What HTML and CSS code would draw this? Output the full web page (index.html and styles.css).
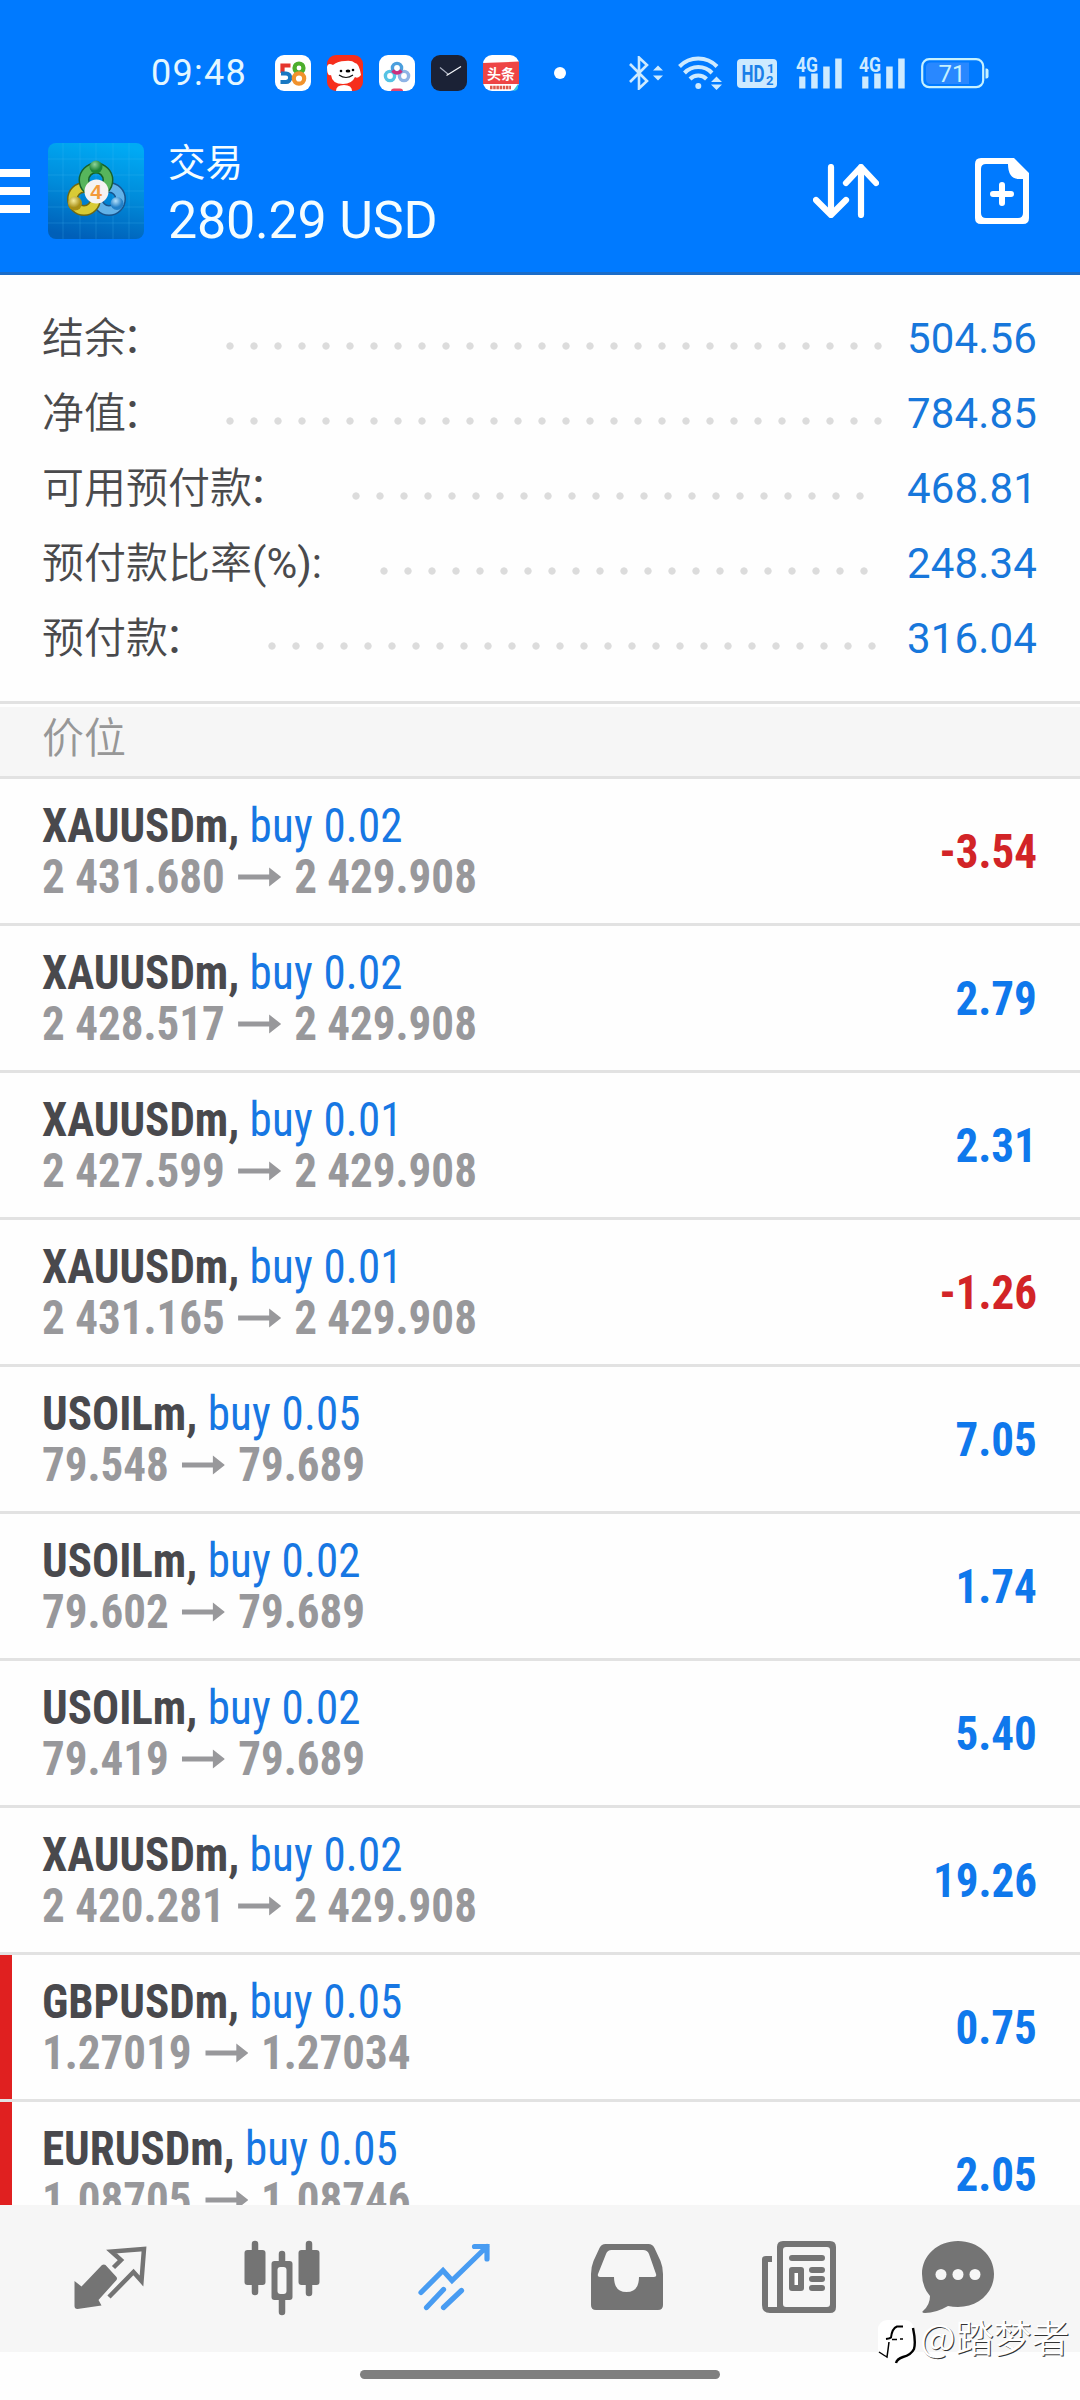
FILE: index.html
```html
<!DOCTYPE html>
<html lang="zh-CN">
<head>
<meta charset="utf-8">
<title>交易</title>
<link rel="stylesheet" href="styles.css">
</head>
<body>
<svg width="0" height="0" class="defs">
  <defs>
    <symbol id="arrow" viewBox="0 0 43 20" preserveAspectRatio="none"><path d="M0 7.500h31V0.500L43 10 31 19.500V12.500H0z" fill="#98989b"/></symbol>
    <symbol id="signal" viewBox="0 0 46 34">
      <text x="0" y="15.500" class="net" textLength="22" lengthAdjust="spacingAndGlyphs">4G</text>
      <path d="M3.200 20.500h6.200v12h-6.200zM15.200 17.500h6.500v15h-6.500zM27.200 10.500h6.500v22h-6.500zM39.200 2.500h6.500v30h-6.500z" fill="#cdeaff"/>
    </symbol>
  </defs>
</svg>

<header class="top">
  <div class="status">
    <span class="time">09:48</span>
    <div class="apps">
      <svg viewBox="0 0 36 36"><rect width="36" height="36" rx="9" fill="#fff"/>
        <g fill="none" stroke-width="4.200"><path d="M15.500 10.500H7.500V18" stroke="#e5352d"/><path d="M6 18.500h5a4 4 0 0 1 0 8.500H5.500" stroke="#1978c2"/><circle cx="24" cy="13" r="4.500" stroke="#4cae2c"/><circle cx="24" cy="23.500" r="5.200" stroke="#f0922c"/></g></svg>
      <svg viewBox="0 0 36 36"><rect width="36" height="36" rx="9" fill="#f62e1c"/>
        <path d="M0 12q1-5 6-2 5-4 12-4 7-1 10 2 4 0 6 12-3 4-6 2-3 7-12 7-11 0-12-9-4 2-4-8z" fill="#fff"/><path d="M9 36q0-6 8-6t8 6z" fill="#fff"/><circle cx="14" cy="16" r="1.300"/><circle cx="26" cy="15" r="1.300"/><ellipse cx="21" cy="16" rx="2.400" ry="1.600"/><path d="M12 20q7 5 14 0" stroke="#111" stroke-width="1.200" fill="none"/></svg>
      <svg viewBox="0 0 36 36"><rect width="36" height="36" rx="9" fill="#fff"/>
        <g fill="none" stroke-width="3.400"><circle cx="11" cy="21" r="4.600" stroke="#55c3e4"/><circle cx="25" cy="21" r="4.600" stroke="#8fb4e6"/><circle cx="18" cy="13" r="4.600" stroke="#4b9fdd"/><path d="M13.500 15.500q4.500 5 9 0" stroke="#cc2f7c"/></g><path d="M12 36q0-2.500 3-2.500h6q3 0 3 2.500z" fill="#e6456a"/></svg>
      <svg viewBox="0 0 36 36"><rect width="36" height="36" rx="9" fill="#1b2236"/><path d="M9 12.500l8.500 7" fill="none" stroke="#aeb4c4" stroke-width="1.100"/><path d="M15.500 20.500L30 11.500" fill="none" stroke="#f4f6fa" stroke-width="1.300"/></svg>
      <svg viewBox="0 0 36 36"><rect width="36" height="36" rx="9" fill="#fff"/><path d="M0 8l36-1.500V29H0z" fill="#ee4545"/><text x="18" y="24" class="toutiao">头条</text><path d="M7 32.500h21" stroke="#dd5a4c" stroke-width="3.500" stroke-dasharray="2.500 .7"/><path d="M30 36l5-7v4q-1 3-5 3z" fill="#37c8dd"/></svg>
    </div>
    <i class="dot"></i>
    <div class="system">
      <svg class="bt" width="35" height="34" viewBox="0 0 35 34"><path d="M1 8l17 17-8 7.500V1.500L18 9 1 26" fill="none" stroke="#cdeaff" stroke-width="2.600"/><path d="M24 14.500l5-5 5 5zM24 19.500h10l-5 5z" fill="#cdeaff"/></svg>
      <svg class="wifi" width="44" height="34" viewBox="0 0 44 34"><g fill="none" stroke="#cdeaff" stroke-width="4"><path d="M1.500 10.500a26 26 0 0 1 37.500 0"/><path d="M6.500 17a19 19 0 0 1 27.500 0"/><path d="M12 23a11.500 11.500 0 0 1 16.500 0"/></g><circle cx="20.300" cy="30" r="3"/><path d="M33 26l5.500-5.500L44 26zM33 28.500h11L38.500 34z"/></svg>
      <svg class="hd" width="40" height="29" viewBox="0 0 40 29"><rect width="40" height="29" rx="4" fill="#cdeaff"/><text x="4.500" y="22.500" class="hdt" textLength="23" lengthAdjust="spacingAndGlyphs">HD</text><text x="30" y="13.500" class="hds">1</text><text x="29" y="26" class="hds">2</text></svg>
      <svg class="sig1" width="46" height="34"><use href="#signal"/></svg>
      <svg class="sig2" width="46" height="34"><use href="#signal"/></svg>
      <svg class="batt" width="68" height="31" viewBox="0 0 68 31"><rect x="1.200" y="1.200" width="61" height="28" rx="7" fill="none" stroke="#c5f1ff" stroke-width="2.200"/><path d="M10 4.500h38v21.500H10q-5 0-5-5V9.500q0-5 5-5z" fill="#2988ff"/><path d="M64.500 10.500h1q2 0 2 2v6q0 2-2 2h-1z" fill="#c5f1ff"/><text x="31" y="24" class="bt-text">71</text></svg>
    </div>
  </div>
  <div class="bar">
    <svg class="menu" width="30" height="44" viewBox="0 0 30 44"><path d="M0 0h30v8H0zM0 18h30v8H0zM0 36h30v8H0z" fill="#fff"/></svg>
    <svg class="logo" width="96" height="96" viewBox="0 0 96 96">
      <defs>
        <linearGradient id="bg" x1=".6" y1="0" x2=".4" y2="1"><stop offset="0" stop-color="#00aaf4"/><stop offset=".5" stop-color="#008bda"/><stop offset="1" stop-color="#005fb8"/></linearGradient>
        <radialGradient id="gg" cx=".4" cy=".3"><stop offset="0" stop-color="#8ed49a"/><stop offset="1" stop-color="#1c8337"/></radialGradient>
        <radialGradient id="yg" cx=".4" cy=".3"><stop offset="0" stop-color="#f6ed9a"/><stop offset="1" stop-color="#a88f14"/></radialGradient>
        <radialGradient id="cg" cx=".4" cy=".3"><stop offset="0" stop-color="#b4e0fa"/><stop offset="1" stop-color="#2380c8"/></radialGradient>
      </defs>
      <rect width="96" height="96" rx="8" fill="url(#bg)"/>
      <path d="M15 0v96M32 0v96M48 0v96M65 0v96M81 0v96M0 16h96M0 32h96M0 48h96M0 64h96M0 80h96" stroke="#48bff8" stroke-opacity=".22" fill="none"/>
      <g fill="none" stroke-width="8">
        <circle cx="61" cy="56" r="11.500" stroke="#17548d" stroke-width="11"/><circle cx="61" cy="56" r="11.500" stroke="#62b2e8"/>
        <circle cx="36" cy="56" r="11.500" stroke="#6f6812" stroke-width="11"/><circle cx="36" cy="56" r="11.500" stroke="#d9cb35"/>
        <circle cx="48" cy="37" r="12" stroke="#17622a" stroke-width="11"/><circle cx="48" cy="37" r="12" stroke="#57b55c"/>
      </g>
      <circle cx="48" cy="24" r="6.500" fill="url(#gg)"/><circle cx="27" cy="60.500" r="7" fill="url(#yg)"/><circle cx="69" cy="60.500" r="6.500" fill="url(#cg)"/>
      <circle cx="48.500" cy="48.500" r="12" fill="#f5f2f2"/><text x="48" y="56" class="four">4</text>
    </svg>
    <div class="heading"><h1>交易</h1><p>280.29 USD</p></div>
    <svg class="sort" width="66" height="54" viewBox="0 0 66 54"><path d="M18 3v48M3 36l15 15 15-15M48 51V3M33 19L48 3l15 16" fill="none" stroke="#fff" stroke-width="6.200" stroke-linecap="round" stroke-linejoin="round"/></svg>
    <svg class="add" width="54" height="66" viewBox="0 0 54 66"><path fill-rule="evenodd" d="M6 0h33l15 15v45q0 6-6 6H6q-6 0-6-6V6Q0 0 6 0zm5 6q-5 0-5 5v44q0 5 5 5h32q5 0 5-5V21h-5Q33 20 33 6z" fill="#fff"/><path d="M27 27v18M18 36h18" stroke="#fff" stroke-width="6" stroke-linecap="round"/></svg>
  </div>
</header>

<section class="summary">
  <div class="line"><span>结余<em>：</em></span><i class="dots n28"></i><b>504.56</b></div>
  <div class="line"><span>净值<em>：</em></span><i class="dots n28"></i><b>784.85</b></div>
  <div class="line"><span>可用预付款<em>：</em></span><i class="dots n22"></i><b>468.81</b></div>
  <div class="line"><span>预付款比率<u>(%):</u></span><i class="dots n21"></i><b>248.34</b></div>
  <div class="line"><span>预付款<em>：</em></span><i class="dots n26"></i><b>316.04</b></div>
</section>
<h2 class="section">价位</h2>

<main class="list">
  <div class="row"><div class="info"><p class="sym">XAUUSDm, <span>buy 0.02</span></p><p class="px">2 431.680<svg><use href="#arrow"/></svg>2 429.908</p></div><b class="neg">-3.54</b></div>
  <div class="row"><div class="info"><p class="sym">XAUUSDm, <span>buy 0.02</span></p><p class="px">2 428.517<svg><use href="#arrow"/></svg>2 429.908</p></div><b>2.79</b></div>
  <div class="row"><div class="info"><p class="sym">XAUUSDm, <span>buy 0.01</span></p><p class="px">2 427.599<svg><use href="#arrow"/></svg>2 429.908</p></div><b>2.31</b></div>
  <div class="row"><div class="info"><p class="sym">XAUUSDm, <span>buy 0.01</span></p><p class="px">2 431.165<svg><use href="#arrow"/></svg>2 429.908</p></div><b class="neg">-1.26</b></div>
  <div class="row"><div class="info"><p class="sym">USOILm, <span>buy 0.05</span></p><p class="px">79.548<svg><use href="#arrow"/></svg>79.689</p></div><b>7.05</b></div>
  <div class="row"><div class="info"><p class="sym">USOILm, <span>buy 0.02</span></p><p class="px">79.602<svg><use href="#arrow"/></svg>79.689</p></div><b>1.74</b></div>
  <div class="row"><div class="info"><p class="sym">USOILm, <span>buy 0.02</span></p><p class="px">79.419<svg><use href="#arrow"/></svg>79.689</p></div><b>5.40</b></div>
  <div class="row"><div class="info"><p class="sym">XAUUSDm, <span>buy 0.02</span></p><p class="px">2 420.281<svg><use href="#arrow"/></svg>2 429.908</p></div><b>19.26</b></div>
  <div class="row flag"><div class="info"><p class="sym">GBPUSDm, <span>buy 0.05</span></p><p class="px">1.27019<svg><use href="#arrow"/></svg>1.27034</p></div><b>0.75</b></div>
  <div class="row flag"><div class="info"><p class="sym">EURUSDm, <span>buy 0.05</span></p><p class="px">1.08705<svg><use href="#arrow"/></svg>1.08746</p></div><b>2.05</b></div>
</main>

<nav class="tabs">
  <svg width="80" height="80" viewBox="70 2237 80 80"><path d="M74.500 2281l7 5.500 20.500-21.500q2-1 3.500 0l11 12q1 1.500 0 3l-18 20 3 5.500-24 3.500q-3 0-3-3z"/><path d="M113.500 2267.500l7.500-7.500-9.500-8.500 32.500-2.500-2.500 32-8-9-24.500 25" fill="none" stroke="#747474" stroke-width="4.500"/></svg>
  <svg width="80" height="80" viewBox="241.500 2237 80 80"><path d="M254.500 2244v48M308.500 2244v49M281.500 2254v58" stroke="#747474" stroke-width="6.500" stroke-linecap="round"/><rect x="244" y="2250" width="21" height="35" rx="3"/><rect x="298" y="2250" width="21" height="35" rx="3"/><rect x="271" y="2261" width="21" height="39" rx="3"/><rect x="277" y="2267" width="9" height="27" rx="3" fill="#f6f6f6"/></svg>
  <svg width="80" height="80" viewBox="413.500 2237 80 80"><path d="M420.500 2292.500l22-22 9 10 35-34M474 2246.500h12.500V2259M426 2307.500l17-18M443 2307.500l18-17" fill="none" stroke="#489cf2" stroke-width="5.200" stroke-linecap="round"/></svg>
  <svg width="80" height="80" viewBox="586.500 2237 80 80"><path fill-rule="evenodd" d="M605 2244h43q4 0 6 4l6 13q2.500 6 2.500 13v31q0 5-5 5h-62q-5 0-5-5v-31q0-7 2.500-13l6-13q2-4 6-4zm6 6q-4 0-5.500 4l-8 20q-1 3 2 3h14q0 15 12.500 15t12.500-15h15q3 0 2-3l-7-20q-1.500-4-6-4z"/></svg>
  <svg width="80" height="80" viewBox="760 2237 80 80"><path fill-rule="evenodd" d="M784 2241h47q6 0 6 6v60q0 6-6 6h-60q-8 0-8-8v-46q0-3 4-3h6v6h-4v45h9v-60q0-6 6-6zm3 6q-3 0-3 3v54q0 3 3 3h41q3 0 3-3v-54q0-3-3-3z"/><path d="M793 2258h30M813 2270h10M813 2279h10M813 2288h10" stroke="#747474" stroke-width="6" stroke-linecap="round"/><rect x="790" y="2267" width="15" height="24" rx="3"/><rect x="795.500" y="2273" width="3.500" height="12" fill="#fff"/></svg>
  <svg width="80" height="80" viewBox="918 2237 80 80"><path d="M958 2241c20 0 36 14 36 33s-16 33-36 33q-5 0-10-1-12 7-23 7-4 0-2-2 7-6 7-15-8-9-8-22c0-19 16-33 36-33z"/><g fill="#f6f6f6"><circle cx="941" cy="2274.500" r="5.500"/><circle cx="958" cy="2274.500" r="5.500"/><circle cx="975" cy="2274.500" r="5.500"/></g></svg>
</nav>
<footer class="home"><i></i></footer>
<div class="mark">
  <svg width="40" height="46" viewBox="0 0 40 46"><rect x="1" y="1" width="36" height="37" rx="9" fill="#fff"/><path d="M26 7.500h-6q-5 2-6 11-1 1-5 1.500" fill="none" stroke="#000" stroke-width="2"/><path d="M12 23q-1 8-2 15-2-1-8-5M15 20.500h5M23 20h3" fill="none" stroke="#000" stroke-width="1.500"/><path d="M36 9q3 14 1 21-3 6-11 8-6 2-7 6" fill="none" stroke="#000" stroke-width="2.400"/></svg>
  <span>@踏梦者</span>
</div>
</body>
</html>
```
FILE: styles.css
```css
* { box-sizing: border-box; margin: 0; padding: 0; }
body {
  position: relative;
  width: 1080px;
  height: 2400px;
  display: flex;
  flex-direction: column;
  overflow: hidden;
  background: #fefefe;
  font-family: Roboto, "Noto Sans CJK SC", sans-serif;
}
svg { display: block; flex: none; }
.defs { position: absolute; }

.top {
  height: 275px;
  flex: none;
  background: #007aff;
  border-bottom: 3px solid #1a6cc8;
  color: #f4fdff;
}
.status {
  height: 127px;
  padding: 19px 0 0 151px;
  display: flex;
  align-items: center;
}
.time { width: 124px; font-size: 36px; line-height: 40px; letter-spacing: 1.300px; color: #e4f7ff; }
.apps { display: flex; gap: 16px; }
.apps svg { width: 36px; height: 36px; }
.dot { width: 12px; height: 12px; margin-left: 35px; border-radius: 50%; background: #fff; }
.system { display: flex; align-items: center; margin-left: 63px; }
.wifi { margin-left: 14px; fill: #cdeaff; }
.hd { margin-left: 15px; }
.sig1 { margin-left: 19px; }
.sig2 { margin-left: 17px; }
.batt { margin-left: 16px; }
.net { font: 700 20px Roboto, sans-serif; fill: #cdeaff; }
.hdt { font: 700 24px Roboto, sans-serif; fill: #1a7fe8; }
.hds { font: 700 13px Roboto, sans-serif; fill: #1a7fe8; }
.bt-text { font: 24px Roboto, sans-serif; fill: #c5f1ff; text-anchor: middle; }
.toutiao { font: 700 14px "Noto Sans CJK SC", sans-serif; fill: #fff; text-anchor: middle; }
.four { font: 700 21px "Liberation Sans", sans-serif; fill: #f39a3a; text-anchor: middle; }
.bar { display: flex; align-items: center; height: 128px; }
.logo { margin-left: 18px; }
.heading { width: 643px; margin-left: 24px; padding-top: 10px; }
.heading h1 { font-size: 37.500px; font-weight: 400; line-height: 50px; }
.heading p { font-size: 52px; line-height: 66px; letter-spacing: -0.200px; }
.sort { margin-left: 2px; }
.add { margin-left: 96px; }

.summary {
  height: 429px;
  flex: none;
  padding: 26px 43px 0 42px;
  border-bottom: 3px solid #e2e2e2;
}
.line { display: flex; height: 75px; line-height: 75px; font-size: 42px; color: #4a4a4c; }
.line span { font-weight: 350; }
.line em { margin: 0 4px 0 -4px; font-style: normal; }
.line u { font-weight: 400; text-decoration: none; }
.line b { margin-left: auto; font-weight: 400; letter-spacing: 0.150px; color: #1777db; }
.dots {
  height: 8px;
  margin: 41px 0 0 58px;
  background: radial-gradient(circle at 4px 4px, #dcdcdc 3.300px, transparent 4px) 0 0 / 24px 8px repeat-x;
}
.n28 { width: 672px; }
.n26 { width: 624px; }
.n22 { width: 528px; }
.n21 { width: 504px; }

.section {
  height: 72px;
  flex: none;
  margin-top: 3px;
  padding-left: 42px;
  border-bottom: 3px solid #e2e2e2;
  background: #f6f6f6;
  font-size: 42px;
  font-weight: 350;
  line-height: 64px;
  color: #979797;
}
.list {
  height: 1426px;
  flex: none;
  overflow: hidden;
  font-family: "Roboto Condensed", Roboto, sans-serif;
  font-stretch: 75%;
  font-size: 48px;
  line-height: 51px;
}
.row {
  display: flex;
  align-items: center;
  height: 147px;
  padding: 0 43px 0 42px;
  border-bottom: 3px solid #e2e2e2;
}
.info { height: 102px; transform: scaleX(.938); transform-origin: left; }
.sym { font-weight: 700; color: #49494d; }
.sym span { font-weight: 400; letter-spacing: 0.200px; color: #1777e3; }
.px { display: flex; align-items: center; gap: 14px; font-weight: 700; color: #98989b; }
.px svg { width: 46px; height: 20px; }
.row > b { margin-left: auto; transform: scaleX(.938); transform-origin: right; color: #0f78ec; }
.row > .neg { color: #d22427; }
.flag { background: linear-gradient(#e02020, #e02020) 0 0 / 12px 144px no-repeat; }

.tabs {
  height: 147px;
  flex: none;
  padding: 32px 49px 0 24px;
  display: grid;
  grid-template-columns: 172px 171px 173px 173px 172px 146px;
  justify-items: center;
  align-items: start;
  background: #f6f6f6;
  fill: #747474;
}
.home { flex: 1; padding-top: 18px; background: #fefefe; }
.home i { display: block; width: 360px; height: 9px; margin: 0 auto; border-radius: 5px; background: #7f7f7f; }
.mark {
  position: absolute;
  left: 877px;
  top: 2319px;
  display: flex;
  align-items: flex-start;
  gap: 3px;
  color: #fff;
  font: 350 38px/34px "Noto Sans CJK SC", sans-serif;
  text-shadow: 1px 1px 0 #333;
}
```
